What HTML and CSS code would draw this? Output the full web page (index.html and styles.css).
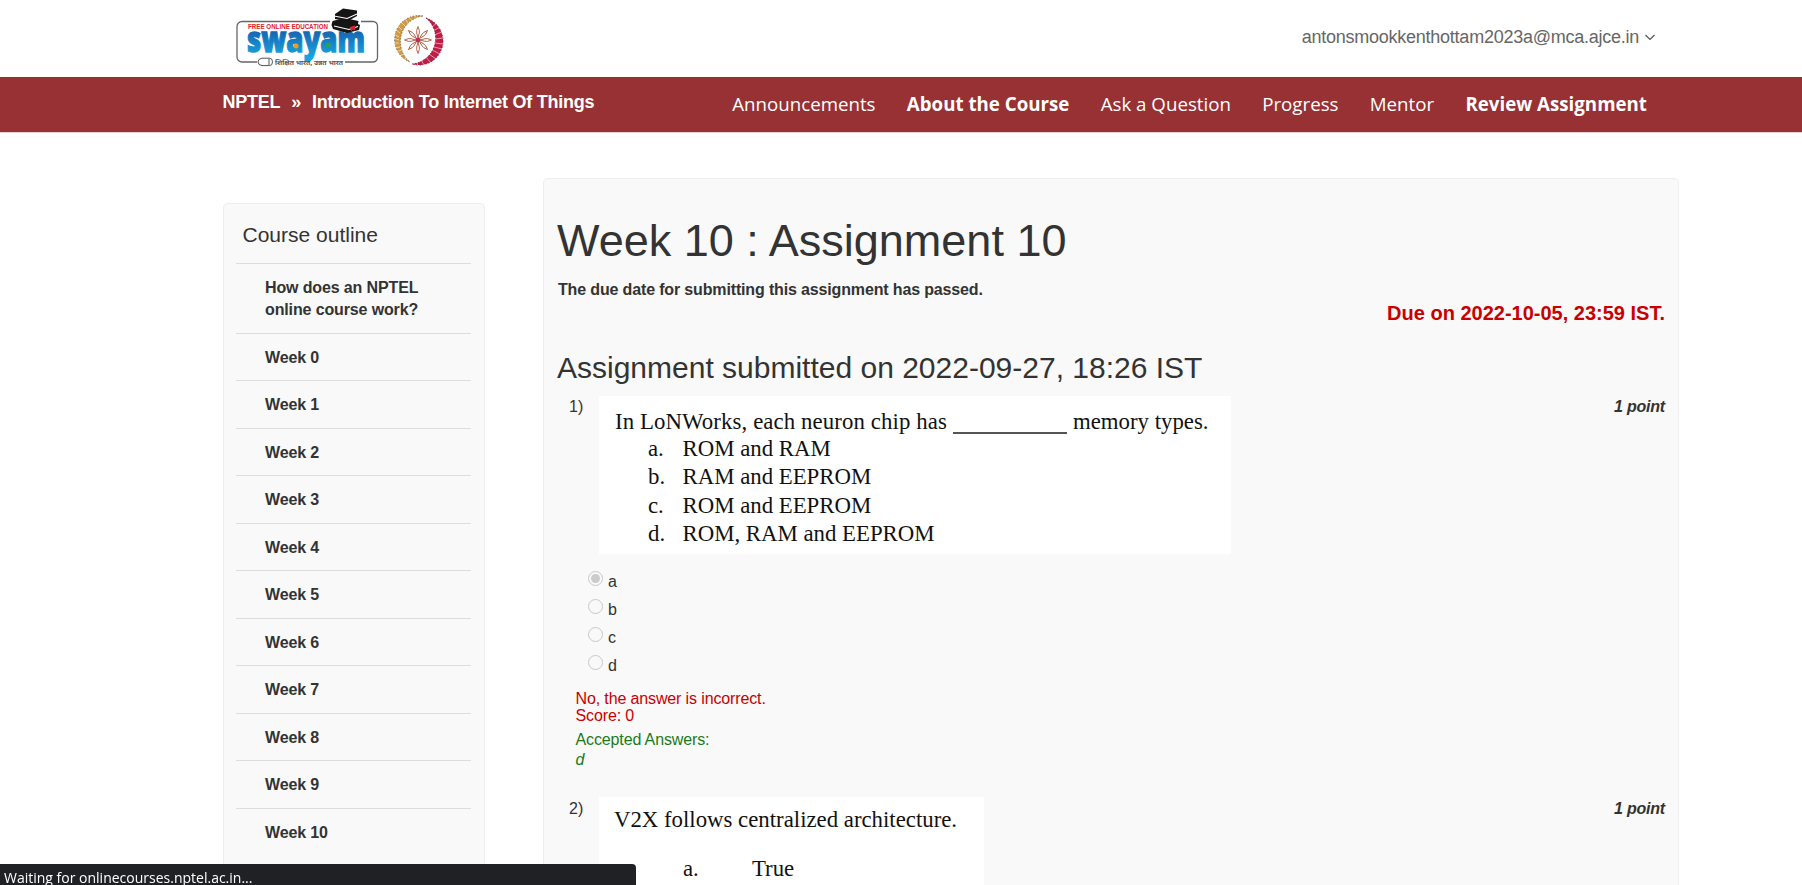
FILE: index.html
```html
<!DOCTYPE html>
<html lang="en">
<head>
<meta charset="utf-8">
<title>Week 10 : Assignment 10</title>
<link rel="stylesheet" href="styles.css">
</head>
<body>
<header class="top">
  <div class="logos">
    <svg class="swayam" width="144" height="62" viewBox="234 6 144 62">
      <defs><linearGradient id="blue" x1="0" y1="0" x2="0" y2="1"><stop offset=".35" stop-color="#1565b0"/><stop offset=".85" stop-color="#16a3e0"/></linearGradient></defs>
      <path d="M330 21.500H242a5 5 0 0 0-5 5V57a5 5 0 0 0 5 5h15M361 21.500h12a4.500 4.500 0 0 1 4.500 4.500V57.500a4.500 4.500 0 0 1-4.500 4.500H345" fill="none" stroke="#666" stroke-width="1.300"/>
      <path d="M262 58.200h7.500q3 0 3 3.700t-3 3.700H262q-4-.500-4-3.700t4-3.700zM269 58.500v7" fill="#fff" stroke="#555" stroke-width="1"/>
      <text x="248" y="28.500" class="logo-tag" textLength="80" lengthAdjust="spacingAndGlyphs">FREE ONLINE EDUCATION</text>
      <text x="247" y="52" class="logo-word" textLength="118" lengthAdjust="spacingAndGlyphs" fill="url(#blue)" stroke="url(#blue)" stroke-width="1.300">swayam</text>
      <circle cx="296" cy="46" r="2.500" fill="#f39a1f"/><circle cx="328" cy="45" r="2.500" fill="#23a455"/>
      <text x="275" y="64.500" class="logo-hindi" textLength="68" lengthAdjust="spacingAndGlyphs">शिक्षित भारत, उन्नत भारत</text>
      <path d="M335 14l8-5.500 14 2v5.500l-9 5-13-2z" fill="#151515"/>
      <path d="M332.500 21l12-3 14 3-.5 3 2 1-1 5-12 3-14-4-1.500-4z" fill="#151515"/>
      <path d="M334 16l13 2.500 10-4.500M334 26l15 3.500 9-3" fill="none" stroke="#fff" stroke-width="1.100"/>
      <path d="M350 27l5-1.500v5l-2-1-2 2z" fill="#e3202c"/>
    </svg>
    <svg class="emblem" width="52" height="52" viewBox="-26 -26 52 52">
      <path d="M5-24A24 24 0 0 0-8 22A26 26 0 0 1 5-24z" fill="#cf9a45" stroke="#7a5a2c" stroke-width=".8" stroke-dasharray="1.500 1.500"/>
      <path d="M8-22A24 24 0 0 1-6 24A26 26 0 0 0 8-22z" fill="#c01c46" stroke="#7d1430" stroke-width=".8" stroke-dasharray="1.500 1.500"/>
      <g fill="none" stroke="#fff" stroke-width=".55">
        <path d="M-4-25l4 5M-9-23l4 5M-13-21l4 5M-17-18l4 4M-20-14l4 4M-22-10l4 3M-24-6l5 3M-25-2l6 2M-25 3l6 0M-24 8l6-1M-22 12l6-2M-19 16l5-2M-15 20l5-3"/>
        <path d="M14-13l6-5M15-9l7-4M16-5l8-3M17-1l8-1M17 3l8 1M16 7l8 2M14 10l8 4M11 14l7 5M7 16l6 7M2 18l4 7M-2 19l2 7"/>
      </g>
      <g fill="#fff" stroke="#a9583c" stroke-width=".9">
        <path id="p" d="M0-2L-1.300-7Q-2-9 0-13.500Q2-9 1.300-7z"/>
        <use href="#p" transform="rotate(45)"/><use href="#p" transform="rotate(90)"/><use href="#p" transform="rotate(135)"/><use href="#p" transform="rotate(180)"/><use href="#p" transform="rotate(225)"/><use href="#p" transform="rotate(270)"/><use href="#p" transform="rotate(315)"/>
      </g>
      <circle r="2.300" fill="#c22c4e"/>
    </svg>
  </div>
  <div class="account"><span>antonsmookkenthottam2023a@mca.ajce.in</span>
    <svg width="10" height="7" viewBox="0 0 10 7"><path d="M.500 1L5 5.500 9.500 1" fill="none" stroke="#555" stroke-width="1.200"/></svg>
  </div>
</header>
<nav class="bar">
  <div class="crumbs"><span>NPTEL</span><span class="sep">»</span><span>Introduction To Internet Of Things</span></div>
  <div class="links"><a>Announcements</a><a class="strong">About the Course</a><a>Ask a Question</a><a>Progress</a><a>Mentor</a><a class="strong">Review Assignment</a></div>
</nav>
<div class="page">
  <aside class="outline">
    <h4>Course outline</h4>
    <ul>
      <li>How does an NPTEL online course work?</li>
      <li>Week 0</li><li>Week 1</li><li>Week 2</li><li>Week 3</li><li>Week 4</li><li>Week 5</li><li>Week 6</li><li>Week 7</li><li>Week 8</li><li>Week 9</li><li>Week 10</li>
    </ul>
  </aside>
  <main class="content">
    <h1>Week 10 : Assignment 10</h1>
    <p class="passed">The due date for submitting this assignment has passed.</p>
    <p class="due">Due on 2022-10-05, 23:59 IST.</p>
    <h2>Assignment submitted on 2022-09-27, 18:26 IST</h2>
    <section class="question first">
      <span class="num">1)</span>
      <div class="sheet sheet-one">
        <div class="stem"><span class="stem-a">In LoNWorks, each neuron chip has</span><span class="blank"></span><span>memory types.</span></div>
        <div class="opt"><span>a.</span><span>ROM and RAM</span></div>
        <div class="opt"><span>b.</span><span>RAM and EEPROM</span></div>
        <div class="opt"><span>c.</span><span>ROM and EEPROM</span></div>
        <div class="opt"><span>d.</span><span>ROM, RAM and EEPROM</span></div>
      </div>
      <span class="points">1 point</span>
    </section>
    <div class="choices">
      <div class="choice"><i class="radio on"></i><span>a</span></div>
      <div class="choice"><i class="radio"></i><span>b</span></div>
      <div class="choice"><i class="radio"></i><span>c</span></div>
      <div class="choice"><i class="radio"></i><span>d</span></div>
    </div>
    <div class="wrong">No, the answer is incorrect.<br>Score: 0</div>
    <div class="accepted">Accepted Answers:<br><em>d</em></div>
    <section class="question second">
      <span class="num">2)</span>
      <div class="sheet sheet-two">
        <div class="stem">V2X follows centralized architecture.</div>
        <div class="opt"><span>a.</span><span>True</span></div>
      </div>
      <span class="points">1 point</span>
    </section>
  </main>
</div>
<div class="status">Waiting for onlinecourses.nptel.ac.in...</div>
</body>
</html>
```
FILE: styles.css
```css
* { box-sizing: border-box; }
html, body { height: 100%; }
body { margin: 0; overflow: hidden; background: #fff; color: #333; font-family: "Liberation Sans", Arial, sans-serif; font-size: 16px; }
h1, h2, h4, p, ul { margin: 0; padding: 0; font-weight: 400; }
.top { height: 77px; display: flex; justify-content: space-between; padding: 0 147px 0 234px; }
.logos { display: flex; gap: 14px; padding-top: 6px; }
.swayam { overflow: visible; }
.emblem { margin-top: 8px; }
.logo-tag { font: 700 6.500px "Liberation Sans", sans-serif; fill: #e3202c; }
.logo-word { font: 800 36px "Open Sans", sans-serif; }
.logo-hindi { font: 700 6.500px "Noto Sans Devanagari", "Noto Sans", sans-serif; fill: #555; }
.account { display: flex; gap: 6px; align-items: center; height: 74px; font-size: 18px; letter-spacing: -.25px; color: #666; }
.bar { height: 56px; display: flex; justify-content: space-between; background: #973133; border-bottom: 1px solid #e9cfd0; color: #fff; padding: 0 155px 0 222.500px; }
.crumbs { display: flex; padding-top: 15px; font-size: 18px; line-height: 20px; font-weight: 700; letter-spacing: -.25px; }
.sep { margin: 0 11px; }
.links { display: flex; gap: 31.300px; padding-top: 14px; font: 18.720px/26px "Open Sans", sans-serif; }
.strong { font-weight: 700; }
.page { display: flex; align-items: stretch; height: 752px; overflow: hidden; padding-left: 223px; }
.outline { width: 262px; margin-top: 70px; border: 1px solid #eee; border-bottom: 0; border-radius: 5px 5px 0 0; background: #f9f9f9; padding: 0 13px 0 12px; }
.outline h4 { font-size: 21px; line-height: 24px; padding: 19px 0 16px 6.500px; }
.outline ul { list-style: none; }
.outline li { border-top: 1px solid #ddd; padding: 12.800px 40px 11.700px 29px; font-weight: 700; line-height: 22px; letter-spacing: -.13px; }
.outline li:first-child { padding-bottom: 12.200px; }
.content { width: 1136px; margin: 45px 0 0 58px; border: 1px solid #eee; border-bottom: 0; border-radius: 5px 5px 0 0; background: #f9f9f9; padding: 0 13px; }
h1 { font-size: 45px; line-height: 50px; margin-top: 37px; }
.passed { font-weight: 700; line-height: 20px; margin: 14px 0 0 1px; letter-spacing: -.15px; }
.due { font-size: 20px; font-weight: 700; line-height: 24px; margin-top: 1px; text-align: right; color: #c90000; }
h2 { font-size: 30px; line-height: 34px; margin-top: 26px; }
.question { display: flex; align-items: flex-start; padding-left: 12px; }
.first { margin-top: 11px; }
.num { width: 30px; line-height: 20px; padding-top: 1px; }
.points { margin-left: auto; line-height: 20px; padding-top: 1px; font-weight: 700; font-style: italic; letter-spacing: -.2px; }
.second .num, .second .points { padding-top: 2px; }
.sheet { background: #fff; color: #111; font-family: "Liberation Serif", "Times New Roman", serif; font-size: 22.800px; }
.sheet-one { width: 632px; height: 158px; padding: 12px 0 0 16px; }
.sheet-one .stem { display: flex; line-height: 28px; height: 27px; }
.sheet-one .stem-a { width: 338px; white-space: nowrap; letter-spacing: .1px; }
.blank { width: 114px; height: 26px; border-bottom: 2px solid #555; margin-right: 6px; }
.sheet-one .opt { display: grid; grid-template-columns: 34.500px 1fr; padding-left: 33px; line-height: 28.300px; }
.choices { padding: 17px 0 0 31px; }
.choice { display: flex; gap: 5px; height: 28px; line-height: 20px; }
.choice span { padding-top: 1px; }
.radio { width: 15px; height: 15px; border: 1px solid #c8c8c8; border-radius: 50%; padding: 2px; }
.on::before { content: ""; display: block; width: 9px; height: 9px; border-radius: 50%; background: #cbcbcb; }
.wrong { padding: 7px 0 0 18.500px; line-height: 17px; color: #c90000; letter-spacing: -.13px; }
.accepted { padding: 6px 0 0 18.500px; line-height: 20px; color: #1b7a1b; letter-spacing: -.13px; }
.second { margin-top: 27px; }
.sheet-two { width: 385px; height: 150px; padding: 9px 0 0 15px; }
.sheet-two .stem { line-height: 28px; }
.sheet-two .opt { display: grid; grid-template-columns: 69px 1fr; padding: 21px 0 0 69px; line-height: 28px; }
.status { position: fixed; left: 0; bottom: 0; width: 636px; height: 21px; background: #202124; color: #fff; border-radius: 0 4px 0 0; padding: 4px 4px 0; font: 14px/19px "Open Sans", sans-serif; white-space: nowrap; }
```
